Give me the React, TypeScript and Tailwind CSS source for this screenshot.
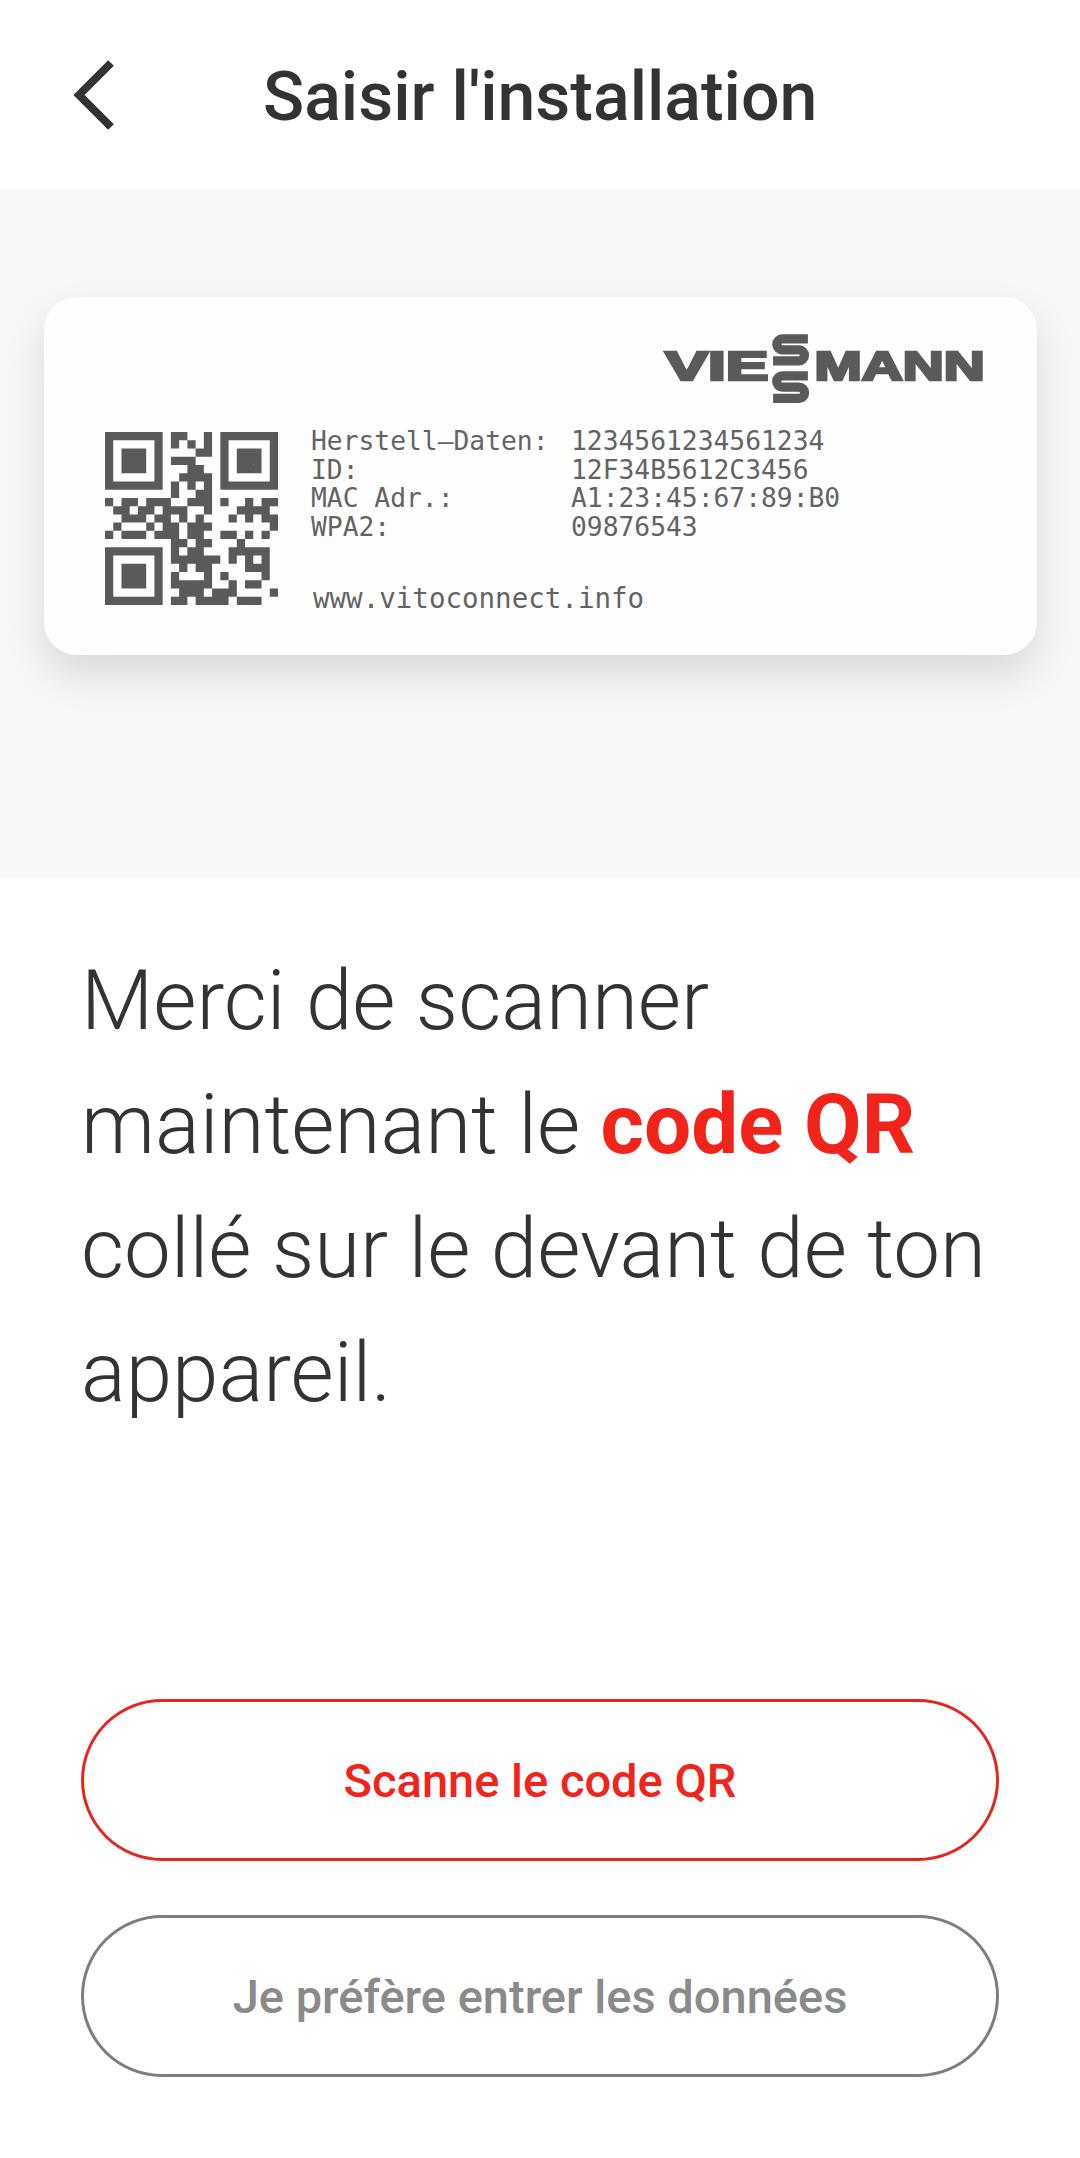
const qr = [
  '#######.##..#.#######',
  '#.....#.#.#.#.#.....#',
  '#.###.#....##.#.###.#',
  '#.###.#.###...#.###.#',
  '#.###.#...##..#.###.#',
  '#.....#..####.#.....#',
  '#######.#.#.#.#######',
  '........#..##........',
  '#.##.###..###.#..#.##',
  '.##.##.###..#...####.',
  '..###.##.#.#...#.#.##',
  '.#...#.##.###.......#',
  '#.###.###.##..##.#.#.',
  '........##.##...#....',
  '#######.#.##...#####.',
  '#.....#.######.#.#.#.',
  '#.###.#..#.##....###.',
  '#.###.#.#...#.#....#.',
  '#.###.#.#####..#.##..',
  '#.....#..###.###....#',
  '#######.##.####.###..',
]
const qrPath = qr.map((row, y) => row.split('').map((c, x) => (c === '#' ? `M${x} ${y}h1v1h-1z` : '')).join('')).join('')

function QrCode() {
  return (
    <svg width="173" height="173" viewBox="0 0 21 21" className="shrink-0">
      <path d={qrPath} fill="#5a5a5a" />
    </svg>
  )
}

function Logo() {
  return (
    <svg width="327" height="73" viewBox="60 30 980 220" fill="#5a5a5a" stroke="#5a5a5a">
      <text x="67" y="176" fontFamily="Liberation Sans" fontWeight="700" fontSize="124" strokeWidth="8" textLength="311" lengthAdjust="spacingAndGlyphs">VIE</text>
      <path d="M497 51H420A16.5 16.5 0 0 0 420 84H470A16.5 16.5 0 0 1 470 117H392" fill="none" strokeWidth="28" />
      <path d="M497 162H420A17 17 0 0 0 420 196H470A17 17 0 0 1 470 230H392" fill="none" strokeWidth="28" />
      <text x="517" y="176" fontFamily="Liberation Sans" fontWeight="700" fontSize="124" strokeWidth="8" textLength="513" lengthAdjust="spacingAndGlyphs">MANN</text>
    </svg>
  )
}

const labelRows = [
  ['Herstell\u2013Daten:', '1234561234561234'],
  ['ID:', '12F34B5612C3456'],
  ['MAC Adr.:', 'A1:23:45:67:89:B0'],
  ['WPA2:', '09876543'],
]

export default function App() {
  return (
    <div className="w-[1080px] h-[2158px] bg-white overflow-hidden font-['Roboto',sans-serif]">
      <header className="h-[189px] pt-[4px] flex items-center">
        <svg width="44" height="70" viewBox="0 0 44 70" fill="none" stroke="#333333" strokeWidth="8" className="ml-[72px] -mt-[4px]">
          <path d="M39 3L7 35L39 67" />
        </svg>
        <h1 className="ml-[147px] text-[68px] leading-none font-medium text-[#333333]">Saisir l'installation</h1>
      </header>

      <section className="h-[689px] bg-[#f7f7f7] pt-[108px] pl-[44px] pr-[43px]">
        <div className="h-[358px] rounded-[33px] bg-[#fefefe] shadow-[0_20px_40px_rgba(0,0,0,0.12)] pl-[61px] pr-[48px] pt-[35px]">
          <div className="flex justify-end">
            <Logo />
          </div>
          <div className="flex mt-[27px] font-['DejaVu_Sans_Mono',monospace] text-[26.3px] leading-[28.5px] text-[#636363]">
            <QrCode />
            <div className="ml-[33px] -mt-[5px]">
              {labelRows.map(([label, value]) => (
                <div key={label} className="flex">
                  <span className="w-[260px]">{label}</span>
                  <span>{value}</span>
                </div>
              ))}
              <div className="mt-[43px] ml-[2px] text-[27.5px]">www.vitoconnect.info</div>
            </div>
          </div>
        </div>
      </section>

      <p className="mt-[61px] px-[81px] text-[83.5px] leading-[124px] font-light text-[#333333]">
        Merci de scanner maintenant le <span className="font-bold text-[#f0241b]">code QR</span> collé sur le devant de ton appareil.
      </p>

      <div className="mt-[264px] px-[81px] flex flex-col gap-[54px]">
        <button className="h-[162px] pt-[2px] rounded-[81px] border-[3px] border-[#e4261f] text-[47px] font-medium text-[#f0241b]">Scanne le code QR</button>
        <button className="h-[162px] pt-[2px] rounded-[81px] border-[3px] border-[#7d7d7d] text-[47px] font-medium text-[#8a8a8a]">Je préfère entrer les données</button>
      </div>
    </div>
  )
}
